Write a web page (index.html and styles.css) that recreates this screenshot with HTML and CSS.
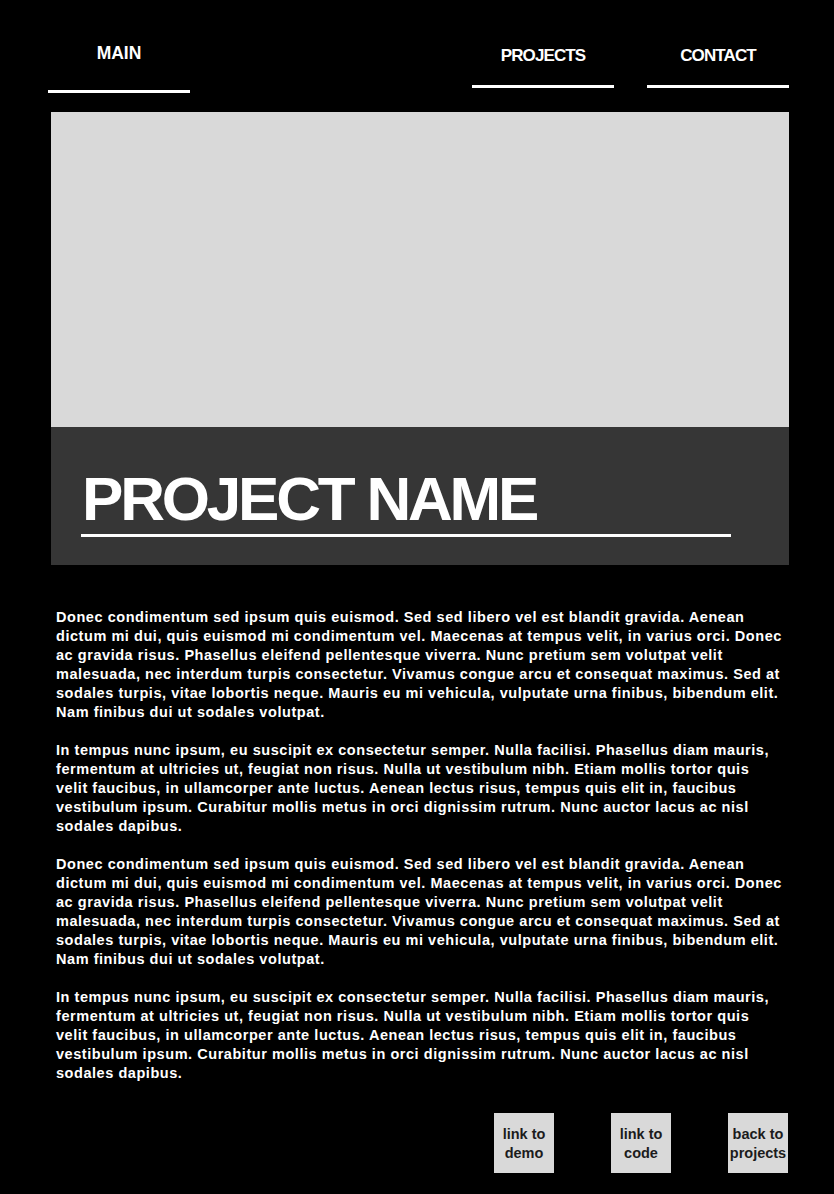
FILE: index.html
```html
<!DOCTYPE html>
<html lang="en">
<head>
<meta charset="utf-8">
<title>Project Name</title>
<link rel="stylesheet" href="styles.css">
</head>
<body>
<nav class="nav">
  <a class="nav-link nav-main" href="#">MAIN</a>
  <a class="nav-link nav-projects" href="#">PROJECTS</a>
  <a class="nav-link" href="#">CONTACT</a>
</nav>
<main class="page">
  <div class="hero"></div>
  <div class="title-band">
    <h1 class="title">PROJECT NAME</h1>
  </div>
  <section class="content">
    <p>Donec condimentum sed ipsum quis euismod. Sed sed libero vel est blandit gravida. Aenean dictum mi dui, quis euismod mi condimentum vel. Maecenas at tempus velit, in varius orci. Donec ac gravida risus. Phasellus eleifend pellentesque viverra. Nunc pretium sem volutpat velit malesuada, nec interdum turpis consectetur. Vivamus congue arcu et consequat maximus. Sed at sodales turpis, vitae lobortis neque. Mauris eu mi vehicula, vulputate urna finibus, bibendum elit. Nam finibus dui ut sodales volutpat.</p>
    <p>In tempus nunc ipsum, eu suscipit ex consectetur semper. Nulla facilisi. Phasellus diam mauris, fermentum at ultricies ut, feugiat non risus. Nulla ut vestibulum nibh. Etiam mollis tortor quis velit faucibus, in ullamcorper ante luctus. Aenean lectus risus, tempus quis elit in, faucibus vestibulum ipsum. Curabitur mollis metus in orci dignissim rutrum. Nunc auctor lacus ac nisl sodales dapibus.</p>
    <p>Donec condimentum sed ipsum quis euismod. Sed sed libero vel est blandit gravida. Aenean dictum mi dui, quis euismod mi condimentum vel. Maecenas at tempus velit, in varius orci. Donec ac gravida risus. Phasellus eleifend pellentesque viverra. Nunc pretium sem volutpat velit malesuada, nec interdum turpis consectetur. Vivamus congue arcu et consequat maximus. Sed at sodales turpis, vitae lobortis neque. Mauris eu mi vehicula, vulputate urna finibus, bibendum elit. Nam finibus dui ut sodales volutpat.</p>
    <p>In tempus nunc ipsum, eu suscipit ex consectetur semper. Nulla facilisi. Phasellus diam mauris, fermentum at ultricies ut, feugiat non risus. Nulla ut vestibulum nibh. Etiam mollis tortor quis velit faucibus, in ullamcorper ante luctus. Aenean lectus risus, tempus quis elit in, faucibus vestibulum ipsum. Curabitur mollis metus in orci dignissim rutrum. Nunc auctor lacus ac nisl sodales dapibus.</p>
  </section>
  <div class="links">
    <a class="link-btn" href="#">link to demo</a>
    <a class="link-btn" href="#">link to code</a>
    <a class="link-btn" href="#">back to projects</a>
  </div>
</main>
</body>
</html>
```

FILE: styles.css
```css
html, body {
  margin: 0;
  padding: 0;
  background: #000;
}

body {
  font-family: "Liberation Sans", Arial, sans-serif;
  font-weight: 700;
  color: #fff;
}

.nav {
  display: flex;
  align-items: flex-start;
  gap: 33px;
  padding: 42px 45px 19px 48px;
}

.nav-link {
  display: block;
  width: 142px;
  box-sizing: border-box;
  text-align: center;
  color: #fff;
  text-decoration: none;
  font-size: 17px;
  line-height: 22px;
  letter-spacing: -0.9px;
  padding: 3px 0 18px;
  border-bottom: 3px solid #fff;
}

.nav-main {
  font-size: 17.5px;
  letter-spacing: 0;
  padding: 0 0 26px;
}

.nav-projects {
  margin-left: auto;
}

.page {
  padding: 0 45px 21px 51px;
}

.hero {
  height: 315px;
  background: #d9d9d9;
}

.title-band {
  background: #363636;
  padding: 41px 58px 28px 30px;
}

.title {
  margin: 0;
  font-size: 62px;
  line-height: 62px;
  letter-spacing: -3.2px;
  padding: 0 0 4px 1px;
  border-bottom: 3px solid #fff;
}

.content {
  display: flex;
  flex-direction: column;
  gap: 19px;
  padding: 43px 6px 0 5px;
}

.content p {
  margin: 0;
  font-size: 14.5px;
  line-height: 19px;
  letter-spacing: 0.55px;
}

.links {
  display: flex;
  justify-content: flex-end;
  gap: 57px;
  padding: 30px 1px 0 0;
}

.link-btn {
  width: 60px;
  height: 60px;
  box-sizing: border-box;
  display: flex;
  align-items: center;
  justify-content: center;
  text-align: center;
  background: #d9d9d9;
  color: #1c1c1c;
  text-decoration: none;
  font-size: 14.5px;
  line-height: 19px;
  padding-top: 2px;
}
```
